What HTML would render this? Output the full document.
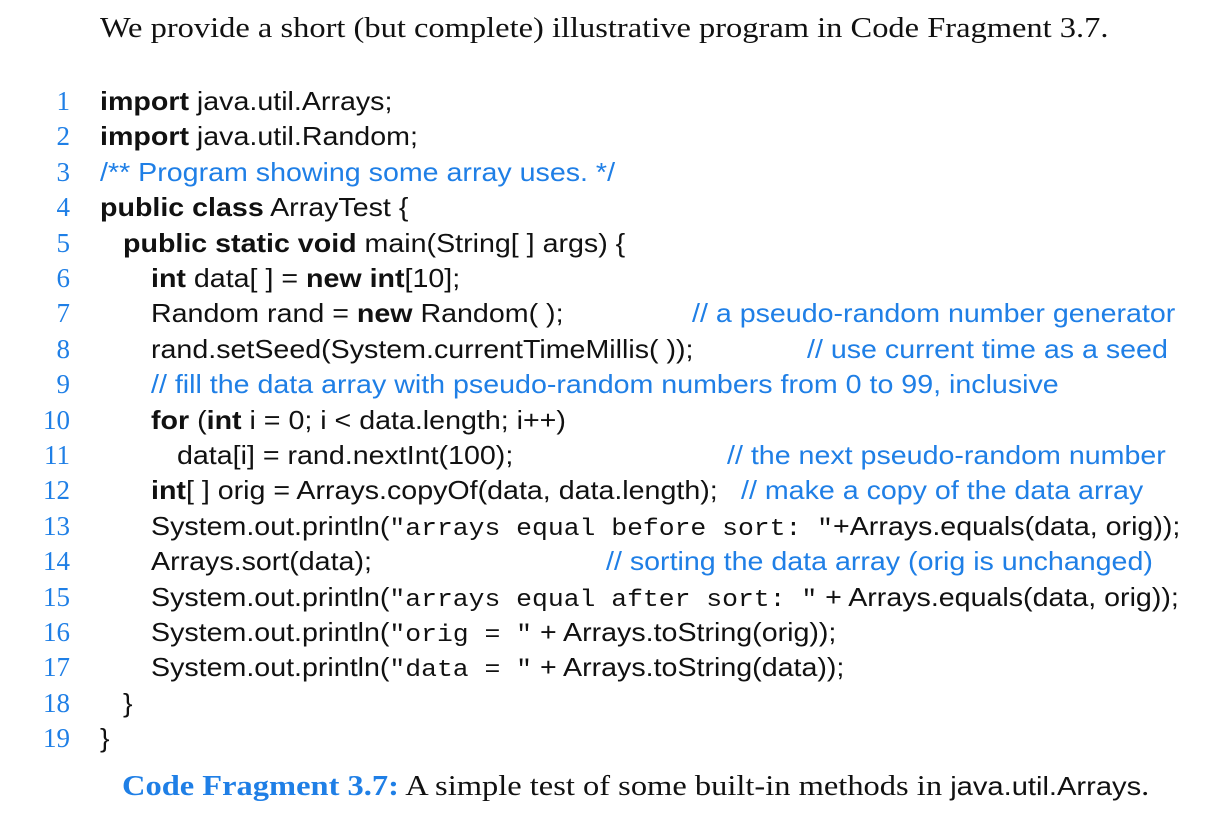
<!DOCTYPE html><html><head><meta charset="utf-8"><style>
body{margin:0;width:1231px;height:831px;background:#fff;position:relative;overflow:hidden;color:#111}
.s{position:absolute;font-family:"Liberation Serif",serif;font-size:29px;white-space:pre;transform:scaleX(1.12);transform-origin:0 50%}
.n{position:absolute;left:20px;width:50px;text-align:right;font-family:"Liberation Serif",serif;font-size:27px;color:#1f7fe6;height:35px;line-height:35px}
.l{position:absolute;font-family:"Liberation Sans",sans-serif;font-size:26px;white-space:pre;height:35px;line-height:35px;transform:scaleX(1.1);transform-origin:0 50%}
.c{color:#1f7fe6}
.m{font-family:"Liberation Mono",monospace;font-size:24px}
b{font-weight:bold}
</style></head><body>
<div class="s" style="left:100px;top:12px">We provide a short (but complete) illustrative program in Code Fragment 3.7.</div>

<div class="n" style="top:84px">1</div><div class="l" style="left:100px;top:84px"><b>import</b> java.util.Arrays;</div>
<div class="n" style="top:119px">2</div><div class="l" style="left:100px;top:119px"><b>import</b> java.util.Random;</div>
<div class="n" style="top:155px">3</div><div class="l c" style="left:100px;top:155px">/** Program showing some array uses. */</div>
<div class="n" style="top:190px">4</div><div class="l" style="left:100px;top:190px"><b>public class</b> ArrayTest {</div>
<div class="n" style="top:226px">5</div><div class="l" style="left:123px;top:226px"><b>public static void</b> main(String[ ] args) {</div>
<div class="n" style="top:261px">6</div><div class="l" style="left:151px;top:261px"><b>int</b> data[ ] = <b>new int</b>[10];</div>
<div class="n" style="top:296px">7</div><div class="l" style="left:151px;top:296px">Random rand = <b>new</b> Random( );</div><div class="l c" style="left:692px;top:296px">// a pseudo-random number generator</div>
<div class="n" style="top:332px">8</div><div class="l" style="left:151px;top:332px">rand.setSeed(System.currentTimeMillis( ));</div><div class="l c" style="left:807px;top:332px">// use current time as a seed</div>
<div class="n" style="top:367px">9</div><div class="l c" style="left:151px;top:367px">// fill the data array with pseudo-random numbers from 0 to 99, inclusive</div>
<div class="n" style="top:403px">10</div><div class="l" style="left:151px;top:403px"><b>for</b> (<b>int</b> i = 0; i &lt; data.length; i++)</div>
<div class="n" style="top:438px">11</div><div class="l" style="left:177px;top:438px">data[i] = rand.nextInt(100);</div><div class="l c" style="left:727px;top:438px">// the next pseudo-random number</div>
<div class="n" style="top:473px">12</div><div class="l" style="left:151px;top:473px"><b>int</b>[ ] orig = Arrays.copyOf(data, data.length);</div><div class="l c" style="left:741px;top:473px">// make a copy of the data array</div>
<div class="n" style="top:509px">13</div><div class="l" style="left:151px;top:509px">System.out.println(<span class="m">"arrays equal before sort: "</span>+Arrays.equals(data, orig));</div>
<div class="n" style="top:544px">14</div><div class="l" style="left:151px;top:544px">Arrays.sort(data);</div><div class="l c" style="left:606px;top:544px">// sorting the data array (orig is unchanged)</div>
<div class="n" style="top:580px">15</div><div class="l" style="left:151px;top:580px">System.out.println(<span class="m">"arrays equal after sort: "</span> + Arrays.equals(data, orig));</div>
<div class="n" style="top:615px">16</div><div class="l" style="left:151px;top:615px">System.out.println(<span class="m">"orig = "</span> + Arrays.toString(orig));</div>
<div class="n" style="top:650px">17</div><div class="l" style="left:151px;top:650px">System.out.println(<span class="m">"data = "</span> + Arrays.toString(data));</div>
<div class="n" style="top:686px">18</div><div class="l" style="left:123px;top:686px">}</div>
<div class="n" style="top:721px">19</div><div class="l" style="left:100px;top:721px">}</div>

<div class="s" style="left:122px;top:770px"><b class="c">Code Fragment 3.7:</b> A simple test of some built-in methods in <span style="font-family:'Liberation Sans',sans-serif;font-size:26px">java.util.Arrays</span>.</div>
</body></html>
